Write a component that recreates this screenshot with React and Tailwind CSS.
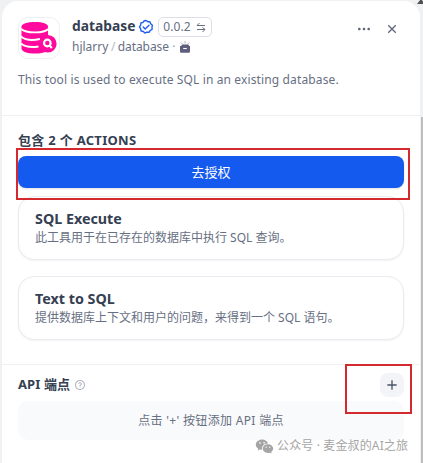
import React from 'react';
import { RiMoreFill, RiCloseLine, RiAddLine, RiQuestionLine, RiWechatFill } from 'react-icons/ri';

function DatabaseLogo() {
  return (
    <svg viewBox="0 0 40 40" className="h-10 w-10" fill="#ff0a9c">
      <path d="M2.500 8.500C2.500 6 8 4 16 4s13 2 13 4.500V30.500c0 3-5 5-13 5s-13.500-2-13.500-5Z" />
      <g fill="none" stroke="#fff" strokeWidth="1.900">
        <path d="M2 11C7 15.500 25 15.500 29.500 11" />
        <path d="M2 18.500C6 22 14 22.500 21 21" />
        <path d="M2 25.500C6 29 13 29.500 19.500 28.500" />
      </g>
      <circle cx="28.800" cy="25.800" r="8.800" />
      <circle cx="28.300" cy="25" r="3.300" fill="none" stroke="#fff" strokeWidth="2.200" />
      <path d="m30.600 27.500 2.200 2.400" stroke="#fff" strokeWidth="2.200" />
    </svg>
  );
}

function VerifiedIcon() {
  return (
    <svg viewBox="0 0 16 16" className="-ml-px mr-px h-4 w-4 shrink-0" fill="none" stroke="#1f60ee" strokeWidth="1.400" strokeLinejoin="round">
      <path d="m8 1.500 1.800 1.200h2.100l.8 2 1.700 1.500L14 8.200l.1 2.200-1.900 1.100-1.200 1.800-2.200-.2L6.900 14l-1.600-1.500-2.200-.5-.4-2.200L1.500 8l1.200-1.800.2-2.200 2.100-.7L6.300 1.700Z" />
      <path d="m5.200 8 2 2L11 6.200" strokeLinecap="round" />
    </svg>
  );
}

function SwapIcon() {
  return (
    <svg viewBox="0 0 12 12" className="h-3 w-3" fill="none" stroke="#676f83" strokeWidth="1">
      <path d="M10 4.500H2M4.500 2 2 4.500M2 8.500h8M7.500 6.500 10 8.500l-2.500 2.500" />
    </svg>
  );
}

function PackageIcon() {
  return (
    <svg viewBox="0 0 12 12" className="-mt-px h-3 w-3" fill="#5d5f7c">
      <path d="M1 5h10v5.500c0 .8-.4 1.200-1 1.200H2c-.6 0-1-.4-1-1.200Z" />
      <path d="M3 3.500h6.500l.8 2H2Z" />
      <path d="m2 1.500 1 1.200M6 .3v2M10 1.500l-1 1.200" stroke="#8f92a6" strokeWidth=".8" />
      <path d="M4.200 7.500h3.600" stroke="#fff" strokeWidth="1.100" />
    </svg>
  );
}

function ActionCard({ title, children }) {
  return (
    <div className="h-[64px] rounded-2xl border border-[#e9ebf0] bg-white px-4 pt-3 shadow-[0_1px_2px_rgba(16,24,40,0.05)]">
      <div className="h-5 whitespace-nowrap text-[14.300px] leading-5 font-bold text-[#354052]">{title}</div>
      <div className="h-4 whitespace-nowrap text-[12px] leading-[18px] text-[#676f83]">{children}</div>
    </div>
  );
}

export default function App() {
  return (
    <div className="relative flex h-[463px] w-[423px] overflow-hidden bg-[#f0f1f2] font-['Noto_Sans','Noto_Sans_CJK_SC',sans-serif]">
      <main className="mt-px ml-[2px] flex h-[480px] w-[418px] flex-col rounded-t-2xl bg-white">
        <header className="h-[115px] border-b border-[#f0f1f4] px-4 pt-4">
          <div className="flex">
            <div className="flex h-[42px] w-[42px] shrink-0 items-center justify-center rounded-[10px] border border-[#eeeff2]">
              <DatabaseLogo />
            </div>
            <div className="ml-3 flex-1">
              <div className="flex h-5 items-center">
                <span className="-mt-px w-[67px] whitespace-nowrap text-[13.800px] font-bold text-[#354052]">database</span>
                <VerifiedIcon />
                <span className="ml-[3px] flex h-5 w-[54px] items-center justify-center gap-1 rounded-[5px] border border-[#dcdfe5] text-[12px] text-[#676f83]">
                  <span className="tracking-[0.1px]">0.0.2</span> <SwapIcon />
                </span>
              </div>
              <div className="flex h-5 items-center whitespace-nowrap text-[12px] text-[#676f83]">
                hjlarry<span className="mx-[2.500px] text-[#b6bac4]">/</span><span className="tracking-[-0.1px]">database</span>
                <span className="mx-[3.500px] text-[#98a2b2]">·</span><PackageIcon />
              </div>
            </div>
            <div className="mt-1 flex h-4 gap-3 text-[#5f6678]">
              <RiMoreFill className="h-4 w-4" />
              <RiCloseLine className="mr-1 h-4 w-4" />
            </div>
          </div>
          <p className="mt-[11px] whitespace-nowrap text-[12px] leading-5 tracking-[0.13px] text-[#676f83]">This tool is used to execute SQL in an existing database.</p>
        </header>
        <section className="h-[249px] border-b border-[#f0f1f4] px-4 pt-[14px]">
          <h2 className="h-[26px] whitespace-nowrap text-[13px] leading-5 font-bold tracking-[0.3px] text-[#354052]">包含 2 个 ACTIONS</h2>
          <button className="block h-8 w-[386px] rounded-lg bg-[#155aef] text-[13px] leading-[31px] text-white shadow-[0_1px_2px_rgba(9,9,11,0.12)]">去授权</button>
          <div className="mt-2 flex w-[386px] flex-col gap-4">
            <ActionCard title="SQL Execute">此工具用于在已存在的数据库中执行 SQL 查询。</ActionCard>
            <ActionCard title="Text to SQL">提供数据库上下文和用户的问题，来得到一个 SQL 语句。</ActionCard>
          </div>
        </section>
        <section className="px-4 pt-2">
          <div className="flex h-6 w-[386px] items-center">
            <h2 className="text-[13px] font-bold tracking-[0.1px] text-[#354052]">API 端点</h2>
            <RiQuestionLine className="ml-1 h-3 w-3 text-[#b1b7c3]" />
            <button className="ml-auto flex h-6 w-6 items-center justify-center rounded-lg bg-[#f3f4f7] text-[#495464]"><RiAddLine className="h-4 w-4" /></button>
          </div>
          <div className="mt-1 h-[39px] w-[386px] rounded-[10px] bg-[#f9fafb] text-center text-[12px] leading-[39px] tracking-[0.33px] text-[#676f83]">点击 '+' 按钮添加 API 端点</div>
        </section>
      </main>
      <div className="relative ml-px w-[2px]">
        <div className="mt-[117px] h-[346px] bg-[#bdbdbd]" />
        <div className="absolute -top-px -left-[4px] h-0 w-0 border-x-[4px] border-b-[5px] border-x-transparent border-b-[#505050]" />
      </div>
      <div className="absolute top-[148px] left-4 h-[52px] w-[394px] border-2 border-[#d3292f]" />
      <div className="absolute top-[364px] left-[345px] h-[50px] w-[67px] border-2 border-[#d3292f]" />
      <div className="absolute top-[436px] left-[255px] flex h-5 items-center whitespace-nowrap text-[12px] tracking-[0.14px] text-[#a5a5a5]">
        <RiWechatFill className="mr-[3px] h-[19px] w-[19px]" />
        公众号 · 麦金叔的AI之旅
      </div>
    </div>
  );
}
